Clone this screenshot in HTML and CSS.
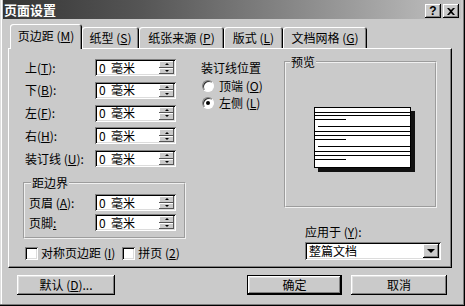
FILE: index.html
```html
<!DOCTYPE html>
<html lang="zh-CN">
  <head>
    <meta charset="UTF-8" />
    <title>页面设置</title>
    <link rel="stylesheet" href="styles.css">
  </head>
  <body>
    <div class="window">
      <div class="titlebar">
        <span class="title">页面设置</span>
        <span class="cap-btns">
          <span class="cap-btn help">?</span>
          <span class="cap-btn">
            <svg width="8" height="7" viewBox="0 0 8 7"><path d="M0 0h2l2 2 2-2h2L5 3.5 8 7H6L4 5 2 7H0l3-3.5z" fill="#000"/></svg>
          </span>
        </span>
      </div>

      <div class="tabs">
        <div class="tab active w1">页边距 (<u>M</u>)</div>
        <div class="tab w2">纸型 (<u>S</u>)</div>
        <div class="tab w3">纸张来源 (<u>P</u>)</div>
        <div class="tab w4">版式 (<u>L</u>)</div>
        <div class="tab w5">文档网格 (<u>G</u>)</div>
      </div>

      <div class="panel">
        <div class="col-left">
          <div class="fields">
            <label>上(<u>T</u>):</label>
            <div class="spin"><span>0&nbsp; 毫米</span><span class="spin-btns"><i class="up"></i><i class="down"></i></span></div>
            <label>下(<u>B</u>):</label>
            <div class="spin"><span>0&nbsp; 毫米</span><span class="spin-btns"><i class="up"></i><i class="down"></i></span></div>
            <label>左(<u>F</u>):</label>
            <div class="spin"><span>0&nbsp; 毫米</span><span class="spin-btns"><i class="up"></i><i class="down"></i></span></div>
            <label>右(<u>H</u>):</label>
            <div class="spin"><span>0&nbsp; 毫米</span><span class="spin-btns"><i class="up"></i><i class="down"></i></span></div>
            <label>装订线 (<u>U</u>):</label>
            <div class="spin"><span>0&nbsp; 毫米</span><span class="spin-btns"><i class="up"></i><i class="down"></i></span></div>
          </div>

          <fieldset class="group margins">
            <legend>距边界</legend>
            <div class="fields small">
              <label>页眉 (<u>A</u>):</label>
              <div class="spin"><span>0&nbsp; 毫米</span><span class="spin-btns"><i class="up"></i><i class="down"></i></span></div>
              <label>页脚<u>:</u></label>
              <div class="spin"><span>0&nbsp; 毫米</span><span class="spin-btns"><i class="up"></i><i class="down"></i></span></div>
            </div>
          </fieldset>

          <div class="checks">
            <span class="checkbox"></span><span class="check-text">对称页边距 (<u>I</u>)</span>
            <span class="checkbox second"></span><span class="check-text">拼页 (<u>2</u>)</span>
          </div>
        </div>

        <div class="col-mid">
          <div class="mid-title">装订线位置</div>
          <div class="radio-row first"><span class="radio"></span>顶端 (<u>O</u>)</div>
          <div class="radio-row"><span class="radio on"></span>左侧 (<u>L</u>)</div>
        </div>

        <div class="col-right">
          <fieldset class="group preview">
            <legend>预览</legend>
            <div class="preview-area">
              <svg width="102" height="65" viewBox="0 0 102 65">
                <rect x="4" y="4" width="97" height="61" fill="#111"/>
                <rect x="0.5" y="0.5" width="96" height="60" fill="#fff" stroke="#000"/>
                <g stroke="#000" stroke-width="1">
                  <path d="M1 5.5h95M1 8.5h95M1 12.5h31"/>
                  <path d="M4 19.5h92M1 24.5h95M1 28.5h95M1 32.5h31"/>
                  <path d="M4 39.5h92M1 44.5h95M1 48.5h95M1 52.5h31"/>
                </g>
              </svg>
            </div>
          </fieldset>
          <div class="apply-label">应用于 (<u>Y</u>):</div>
          <div class="select">
            <span>整篇文档</span>
            <span class="select-btn"><i></i></span>
          </div>
        </div>
      </div>

      <div class="footer">
        <button class="btn w-default">默认 (<u>D</u>)...</button>
        <button class="btn btn-ok">确定</button>
        <button class="btn btn-cancel">取消</button>
      </div>
    </div>
  </body>
</html>
```

FILE: styles.css
```css
* {
  box-sizing: border-box;
}
body {
  margin: 0;
  background: #cacaca;
  font-family: "Noto Sans CJK SC", "Noto Sans", sans-serif;
  font-size: 12px;
  line-height: 14px;
  color: #000;
}
u {
  text-decoration: underline;
}
.window {
  width: 465px;
  height: 306px;
  background: #cacaca;
  padding: 0 4px 4px 3px;
  display: flex;
  flex-direction: column;
  box-shadow: inset -1px -1px 0 #000, inset -2px -2px 0 #7c7c7c, inset 1px 0 0 #dedede, inset 2px 0 0 #fff;
}
.titlebar {
  height: 19px;
  display: flex;
  align-items: center;
  justify-content: space-between;
  padding: 0 2px 0 1px;
  background: linear-gradient(to right, #353535, #555 30%, #8a8a8a 65%, #c2c2c2);
}
.title {
  color: #fff;
  font-weight: bold;
  font-size: 13px;
}
.cap-btns {
  display: flex;
  gap: 2px;
  margin-top: 3px;
}
.cap-btn {
  width: 16px;
  height: 14px;
  display: flex;
  align-items: center;
  justify-content: center;
  background: #cacaca;
  box-shadow: inset -1px -1px 0 #000, inset 1px 1px 0 #fff, inset -2px -2px 0 #808080;
}
.help {
  font-family: "Liberation Sans", sans-serif;
  font-weight: bold;
  font-size: 12px;
}

/* tabs */
.tabs {
  display: flex;
  align-items: flex-end;
  height: 24px;
  margin-top: 5px;
  padding-left: 7px;
}
.tab {
  height: 21px;
  display: flex;
  align-items: center;
  justify-content: center;
  white-space: pre;
  background: #cacaca;
  border-radius: 3px 3px 0 0;
  box-shadow: inset 1px 1px 0 #fff, inset -1px 0 0 #000, inset -2px 0 0 #808080;
}
.tab.active {
  height: 25px;
  margin-bottom: -1px;
  padding-bottom: 1px;
  position: relative;
  z-index: 1;
}
.w1 { width: 72px; }
.w2 { width: 57px; }
.w3 { width: 85px; }
.w4 { width: 59px; }
.w5 { width: 84px; }

/* panel */
.panel {
  width: 444px;
  height: 220px;
  margin-left: 5px;
  display: flex;
  align-items: flex-start;
  padding: 10px 0 0 13px;
  border-top: 1px solid #fff;
  border-left: 1px solid #fff;
  border-right: 1px solid #000;
  border-bottom: 1px solid #000;
  box-shadow: inset -1px -1px 0 #808080;
}
.col-left {
  width: 164px;
}
.fields {
  display: grid;
  grid-template-columns: 73px 81px;
  row-gap: 5.75px;
  align-items: center;
}
.fields label {
  padding-left: 3px;
  white-space: nowrap;
}
.fields.small {
  grid-template-columns: 66px 81px;
  row-gap: 3px;
}
.fields.small label {
  padding-left: 0;
}
.spin {
  height: 17px;
  display: flex;
  align-items: center;
  justify-content: space-between;
  padding: 2px 2px 2px 4px;
  background: #fff;
  box-shadow: inset 1px 1px 0 #808080, inset -1px -1px 0 #fff, inset 2px 2px 0 #000, inset -2px -2px 0 #dcdcdc;
}
.spin-btns {
  width: 15px;
  height: 13px;
  display: flex;
  flex-direction: column;
}
.spin-btns i {
  flex: 1;
  display: flex;
  align-items: center;
  justify-content: center;
  background: #cacaca;
  box-shadow: inset -1px -1px 0 #555, inset 1px 1px 0 #fff;
}
.spin-btns i::after {
  content: "";
  border-left: 2px solid transparent;
  border-right: 2px solid transparent;
}
.spin-btns .up::after {
  border-bottom: 2px solid #000;
}
.spin-btns .down::after {
  border-top: 2px solid #000;
}

.group {
  margin: 0;
  padding: 0;
  border: 2px groove #f0f0f0;
}
.group legend {
  padding: 0 1px;
  line-height: 14px;
}
.margins {
  width: 163px;
  margin: 9px 0 0 1px;
  padding: 4px 0 6px 4px;
}
.margins legend {
  margin-left: 2px;
}
.checks {
  display: flex;
  align-items: center;
  margin-top: 7px;
  padding-left: 3px;
}
.checkbox {
  width: 13px;
  height: 13px;
  background: #fff;
  box-shadow: inset 1px 1px 0 #808080, inset -1px -1px 0 #fff, inset 2px 2px 0 #000, inset -2px -2px 0 #dcdcdc;
}
.checkbox.second {
  margin-left: 7px;
}
.check-text {
  margin-left: 3px;
}

.col-mid {
  width: 83px;
  margin-left: 15px;
  padding-top: 2px;
}
.radio-row {
  display: flex;
  align-items: center;
  height: 14px;
  margin-top: 3px;
  padding-left: 1px;
}
.radio-row.first {
  margin-top: 4px;
}
.radio {
  width: 12px;
  height: 12px;
  margin-right: 5px;
  border-radius: 50%;
  background: #fff;
  display: flex;
  align-items: center;
  justify-content: center;
  border: 1px solid;
  border-color: #808080 #fff #fff #808080;
  box-shadow: inset 1px 1px 0 #303030;
}
.radio.on::after {
  content: "";
  width: 4px;
  height: 4px;
  border-radius: 50%;
  background: #000;
}

.col-right {
  width: 160px;
  margin-top: -4px;
}
.preview {
  width: 153px;
  height: 153px;
}
.preview legend {
  margin-left: 4px;
}
.preview-area {
  height: 135px;
  display: flex;
  align-items: center;
  justify-content: center;
  padding: 6px 0 0 8px;
}
.apply-label {
  margin: 17px 0 0 21px;
}
.select {
  width: 136px;
  height: 18px;
  margin: 3px 0 0 21px;
  display: flex;
  align-items: center;
  justify-content: space-between;
  padding: 2px 2px 2px 4px;
  background: #fff;
  box-shadow: inset 1px 1px 0 #808080, inset -1px -1px 0 #fff, inset 2px 2px 0 #000, inset -2px -2px 0 #dcdcdc;
}
.select-btn {
  width: 16px;
  height: 14px;
  display: flex;
  align-items: center;
  justify-content: center;
  background: #cacaca;
  box-shadow: inset -1px -1px 0 #000, inset 1px 1px 0 #fff, inset -2px -2px 0 #808080;
}
.select-btn i {
  border-left: 4px solid transparent;
  border-right: 4px solid transparent;
  border-top: 4px solid #000;
}

/* buttons */
.footer {
  display: flex;
  margin-top: 7px;
  padding: 0 14px;
}
.btn {
  height: 20px;
  padding: 0;
  font: inherit;
  color: #000;
  background: #cacaca;
  border: none;
  box-shadow: inset -1px -1px 0 #000, inset 1px 1px 0 #fff, inset -2px -2px 0 #808080, inset 2px 2px 0 #e0e0e0;
}
.w-default {
  width: 98px;
}
.btn-ok {
  width: 95px;
  margin-left: auto;
  border: 1px solid #000;
}
.btn-cancel {
  width: 96px;
  margin-left: 9px;
}
```
